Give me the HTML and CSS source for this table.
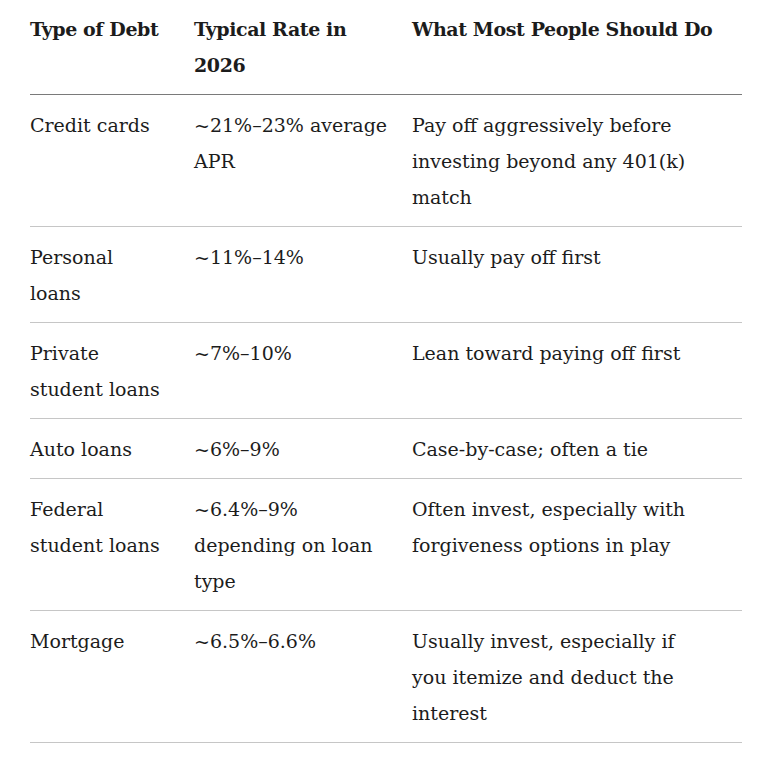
FILE: index.html
```html
<!DOCTYPE html>
<html lang="en">
<head>
<meta charset="utf-8">
<title>Debt vs Investing</title>
<link rel="stylesheet" href="styles.css">
</head>
<body>
<div class="wrap">
<table class="debt-table">
  <colgroup>
    <col class="c1">
    <col class="c2">
    <col class="c3">
  </colgroup>
  <thead>
    <tr>
      <th>Type of Debt</th>
      <th>Typical Rate in 2026</th>
      <th>What Most People Should Do</th>
    </tr>
  </thead>
  <tbody>
    <tr>
      <td>Credit cards</td>
      <td>~21%–23% average APR</td>
      <td>Pay off aggressively before investing beyond any 401(k) match</td>
    </tr>
    <tr>
      <td>Personal loans</td>
      <td>~11%–14%</td>
      <td>Usually pay off first</td>
    </tr>
    <tr>
      <td>Private student loans</td>
      <td>~7%–10%</td>
      <td>Lean toward paying off first</td>
    </tr>
    <tr>
      <td>Auto loans</td>
      <td>~6%–9%</td>
      <td>Case-by-case; often a tie</td>
    </tr>
    <tr>
      <td>Federal student loans</td>
      <td>~6.4%–9% depending on loan type</td>
      <td>Often invest, especially with forgiveness options in play</td>
    </tr>
    <tr>
      <td>Mortgage</td>
      <td>~6.5%–6.6%</td>
      <td>Usually invest, especially if you itemize and deduct the interest</td>
    </tr>
  </tbody>
</table>
</div>
</body>
</html>
```

FILE: styles.css
```css
html, body {
  margin: 0;
  padding: 0;
  background: #ffffff;
}

.wrap {
  padding: 0 30px;
}

.debt-table {
  width: 712px;
  border-collapse: collapse;
  table-layout: fixed;
  font-family: "DejaVu Serif", serif;
  font-size: 19px;
  line-height: 36px;
  color: #1c1c1c;
}

.c1 { width: 164px; }
.c2 { width: 218px; }
.c3 { width: 330px; }

.debt-table th,
.debt-table td {
  text-align: left;
  vertical-align: top;
  padding: 12px 24px 11px 0;
}

.debt-table th:nth-child(1),
.debt-table td:nth-child(1) {
  padding-right: 28px;
}

.debt-table th:nth-child(2),
.debt-table td:nth-child(2) {
  padding-right: 18px;
}

.debt-table td:nth-child(3) {
  padding-right: 40px;
}

.debt-table th:nth-child(3) {
  padding-right: 0;
}

.debt-table th {
  font-weight: bold;
  letter-spacing: -0.4px;
  padding-top: 11px;
  padding-bottom: 11px;
  border-bottom: 1px solid #7a7a7a;
}

.debt-table td {
  border-bottom: 1px solid #c6c6c6;
}
```
